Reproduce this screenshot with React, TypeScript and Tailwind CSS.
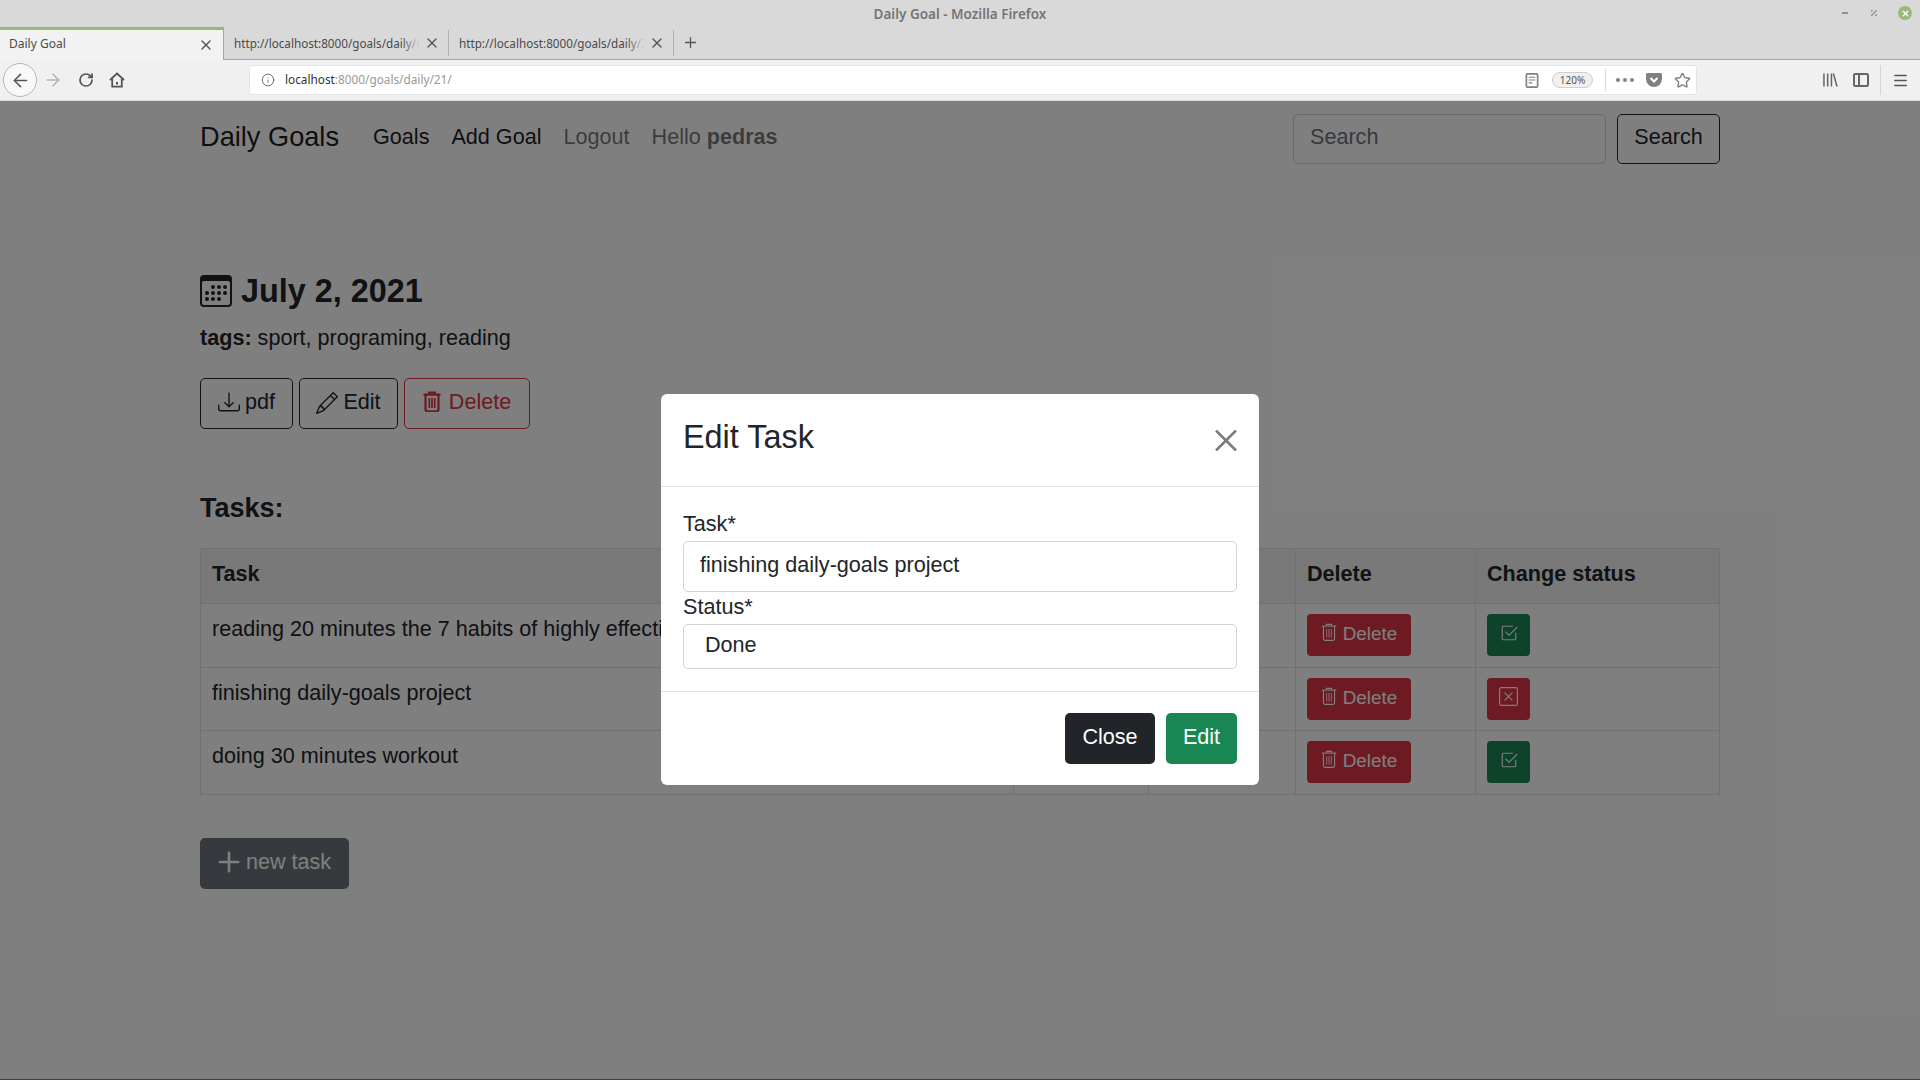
import {
  BsCalendar3,
  BsCheck2Square,
  BsDownload,
  BsPencil,
  BsPlus,
  BsXSquare,
} from 'react-icons/bs';
import { ArrowLeft, ArrowRight, Info, Menu, Plus, RotateCw, Star, X } from 'lucide-react';

const tasks = [
  { title: 'reading 20 minutes the 7 habits of highly effective people', status: 'Done', done: true },
  { title: 'finishing daily-goals project', status: 'Done', done: false },
  { title: 'doing 30 minutes workout', status: 'Done', done: true },
];

function TrashIcon({ className, weight }: { className: string; weight: number }) {
  return (
    <svg viewBox="0 0 18 21" className={className} fill="none" stroke="currentColor" strokeWidth={weight}>
      <path d="M6 3V1.6h6V3" />
      <path d="M0.5 3.6h17" />
      <path d="M2.5 4v14.5c0 1 .8 1.8 1.8 1.8h9.4c1 0 1.8-.8 1.8-1.8V4" />
      <path d="M6.3 7v10M9 7v10M11.7 7v10" strokeWidth={weight * 0.75} />
    </svg>
  );
}

function Tab({ title, active }: { title: string; active?: boolean }) {
  if (active) {
    return (
      <div className="w-[224px] h-[33px] bg-[#f2f2f2] border-t border-[#a6a6a6] border-r flex flex-col">
        <div className="h-[2px] bg-[#9ab87c]" />
        <div className="flex-1 flex items-center pl-[9px] pr-[9px] justify-between">
          <span className="text-[12px] text-[#4a4a4a] -mt-[2px]">{title}</span>
          <X className="w-[16px] h-[16px] text-[#555]" strokeWidth={2} />
        </div>
      </div>
    );
  }
  return (
    <div className="w-[225px] h-[26px] mt-[3px] border-r border-[#b0b0b0] flex items-center pl-[10px] pr-[8px] justify-between">
      <div className="relative w-[186px] -mt-[2px] overflow-hidden whitespace-nowrap">
        <span className="text-[11.7px] text-[#4a4a4a]">{title}</span>
        <div className="absolute right-0 top-0 bottom-0 w-[18px] bg-linear-to-l from-[#d9d9d9] to-transparent" />
      </div>
      <X className="w-[16px] h-[16px] text-[#555]" strokeWidth={2} />
    </div>
  );
}

function BrowserChrome() {
  return (
    <div className="font-['Noto_Sans',sans-serif] shrink-0">
      {/* title bar */}
      <div className="relative h-[27px] bg-[#d9d9d9] flex items-center justify-center">
        <span className="text-[13.5px] font-semibold text-[#757575] mt-[2px]">Daily Goal - Mozilla Firefox</span>
        <div className="absolute right-[8px] top-[6px] flex items-center">
          <div className="w-[6px] h-[2px] bg-[#909090] mr-[23px]" />
          <svg viewBox="0 0 6 6" className="w-[6px] h-[6px] mr-[21px]">
            <path d="M0 2.5L2.5 0H0zM6 3.5L3.5 6H6zM1 6L6 1V0H5L0 5v1z" fill="#969696" />
          </svg>
          <div className="w-[14px] h-[14px] rounded-full bg-[#9ab87c] flex items-center justify-center">
            <X className="w-[9px] h-[9px] text-white" strokeWidth={3.5} />
          </div>
        </div>
      </div>
      {/* tabs */}
      <div className="h-[33px] bg-[#d9d9d9] border-b border-[#a6a6a6] flex items-start">
        <Tab title="Daily Goal" active />
        <Tab title="http://localhost:8000/goals/daily/create" />
        <Tab title="http://localhost:8000/goals/daily/21/edit" />
        <Plus className="w-[17px] h-[17px] text-[#555] ml-[8px] mt-[7px]" strokeWidth={1.8} />
      </div>
      {/* nav bar */}
      <div className="h-[41px] bg-[#f0f0f0] border-b border-[#dcdcdc] flex items-center pl-[3px]">
        <div className="w-[34px] h-[34px] rounded-full border border-[#b5b5b5] bg-[#f8f8f8] flex items-center justify-center">
          <ArrowLeft className="w-[21px] h-[21px] text-[#555]" strokeWidth={1.7} />
        </div>
        <ArrowRight className="w-[20px] h-[20px] text-[#b3b3b3] ml-[6px]" strokeWidth={1.7} />
        <RotateCw className="w-[16px] h-[16px] text-[#555] ml-[15px]" strokeWidth={2.6} />
        <svg viewBox="0 0 16 16" className="w-[16px] h-[16px] ml-[15px]" fill="none" stroke="#555" strokeWidth="1.8">
          <path d="M1 8l7-6.5L15 8" />
          <path d="M3.2 7v7.6h9.6V7" />
          <rect x="7" y="10" width="2" height="2.5" fill="#555" stroke="none" />
        </svg>
        <div className="ml-[124px] w-[1448px] h-[30px] bg-white rounded-[3px] border border-[#e4e4e4] flex items-center pl-[11px] pr-[5px]">
          <Info className="w-[14px] h-[14px] text-[#666]" strokeWidth={1.6} />
          <span className="ml-[10px] text-[11.8px] text-[#333]">
            localhost<span className="text-[#999]">:8000/goals/daily/21/</span>
          </span>
          <div className="flex-1" />
          <svg viewBox="0 0 14 16" className="w-[14px] h-[15px]" fill="none" stroke="#808080" strokeWidth="1.8">
            <rect x="1" y="1" width="12" height="14" rx="1" />
            <path d="M3.5 4.5h7M3.5 7.5h7M3.5 10.5h4" strokeWidth="1.2" />
          </svg>
          <div className="ml-[13px] w-[41px] h-[16px] rounded-full border border-[#cfcfcf] bg-[#f0f0f0] flex items-center justify-center text-[10px] text-[#555]">
            120%
          </div>
          <div className="ml-[12px] w-px h-[22px] bg-[#d5d5d5]" />
          <div className="ml-[10px] flex gap-[3px]">
            <div className="w-[4px] h-[4px] rounded-full bg-[#808080]" />
            <div className="w-[4px] h-[4px] rounded-full bg-[#808080]" />
            <div className="w-[4px] h-[4px] rounded-full bg-[#808080]" />
          </div>
          <svg viewBox="0 0 16 14" className="w-[16px] h-[14px] ml-[12px]">
            <path d="M1.5 0h13A1.5 1.5 0 0 1 16 1.5V6a8 8 0 0 1-16 0V1.5A1.5 1.5 0 0 1 1.5 0z" fill="#808080" />
            <path d="M4.5 5L8 8.5 11.5 5" stroke="#fff" strokeWidth="2" fill="none" />
          </svg>
          <Star className="w-[17px] h-[17px] text-[#808080] ml-[12px]" strokeWidth={2} />
        </div>
        <div className="flex-1 flex items-center justify-end pr-[11px]">
          <svg viewBox="0 0 16 14" className="w-[15px] h-[14px] mr-[15px]">
            <path d="M1 0v14M5 0v14M9 0v14M11 0l4 14" stroke="#666" strokeWidth="1.6" fill="none" />
          </svg>
          <div className="w-[16px] h-[14px] rounded-[2px] border-2 border-[#666] mr-[11px] flex">
            <div className="w-[5px] border-r-2 border-[#666]" />
          </div>
          <div className="w-px h-[30px] bg-[#d5d5d5] mr-[11px]" />
          <Menu className="w-[17px] h-[17px] text-[#555]" strokeWidth={2.2} />
        </div>
      </div>
    </div>
  );
}

function TaskRow({ title, status, done }: { title: string; status: string; done: boolean }) {
  return (
    <tr className="h-[63.5px] border-t border-[#dee2e6]">
      <td className="px-[11px] pt-[9px] align-top whitespace-nowrap overflow-hidden">{title}</td>
      <td className="border-l border-[#dee2e6] px-[11px] pt-[9px] align-top">{status}</td>
      <td className="border-l border-[#dee2e6] px-[11px] pt-[10px] align-top" />
      <td className="border-l border-[#dee2e6] px-[11px] pt-[10px] align-top">
        <button className="w-[104px] h-[42px] bg-[#dc3545] rounded-[4px] text-white text-[18.9px] flex items-center justify-center gap-[6px] pb-[1px]">
          <TrashIcon className="w-[16px] h-[18px] -mt-[5px]" weight={1.3} />
          Delete
        </button>
      </td>
      <td className="border-l border-[#dee2e6] px-[11px] pt-[10px] align-top">
        {done ? (
          <button className="w-[43px] h-[42px] bg-[#198754] rounded-[4px] text-white flex items-center justify-center">
            <BsCheck2Square className="w-[18px] h-[18px] -mt-[4px]" />
          </button>
        ) : (
          <button className="w-[43px] h-[42px] bg-[#dc3545] rounded-[4px] text-white flex items-center justify-center">
            <BsXSquare className="w-[19px] h-[19px] -mt-[4px]" />
          </button>
        )}
      </td>
    </tr>
  );
}

function EditModal() {
  return (
    <div className="absolute inset-0 bg-black/50 flex justify-center pt-[293px]">
      <div className="w-[598px] h-[391px] bg-white rounded-[6px] flex flex-col">
        <div className="h-[93px] border-b border-[#dee2e6] flex items-start justify-between pl-[22px] pr-[22px] pt-[24px]">
          <h5 className="text-[32.4px] leading-[1.2] text-[#212529]">Edit Task</h5>
          <svg viewBox="0 0 22 21" className="w-[22px] h-[21px] mt-[12px]" fill="none" stroke="#7c7c7c" strokeWidth="2.6">
            <path d="M1 0.5l20 20M21 0.5l-20 20" />
          </svg>
        </div>
        <div className="h-[205px] border-b border-[#dee2e6] px-[22px] pt-[21px] leading-[32px] text-[#212529]">
          <label className="block h-[33px]">Task*</label>
          <div className="h-[51px] border border-[#ced4da] rounded-[5px] pl-[16px] pt-[7px]">finishing daily-goals project</div>
          <label className="block h-[32px] -mt-[1px] mb-[1px]">Status*</label>
          <div className="h-[45px] border border-[#ced4da] rounded-[5px] pl-[21px] pt-[4px]">Done</div>
        </div>
        <div className="flex-1 flex justify-end gap-[11px] pt-[21px] pr-[22px]">
          <button className="w-[90px] h-[51px] bg-[#212529] rounded-[5px] text-white pb-[2px]">Close</button>
          <button className="w-[71px] h-[51px] bg-[#198754] rounded-[5px] text-white pb-[2px]">Edit</button>
        </div>
      </div>
    </div>
  );
}

export default function App() {
  return (
    <div className="w-[1920px] h-[1080px] overflow-hidden flex flex-col bg-white">
      <BrowserChrome />
      <div className="relative flex-1 border-b border-[#404040] font-['Liberation_Sans',Arial,sans-serif] text-[21.6px] text-[#212529]">
        <div className="w-[1520px] ml-[200px]">
          {/* navbar */}
          <div className="flex items-start pt-[13px]">
            <a className="text-[27.2px] leading-[40px] text-black/90 mt-[3px]">Daily Goals</a>
            <nav className="flex gap-[22px] ml-[34px] mt-[7px] leading-[32px]">
              <a className="text-black/90">Goals</a>
              <a className="text-black/90">Add Goal</a>
              <a className="text-black/55">Logout</a>
              <span className="text-black/55">
                Hello <b>pedras</b>
              </span>
            </nav>
            <div className="flex-1" />
            <div className="w-[313px] h-[50px] border border-[#ced4da] rounded-[5px] pl-[16px] pt-[6px] text-[#6c757d]">Search</div>
            <button className="ml-[11px] w-[103px] h-[50px] border border-[#212529] rounded-[5px] pb-[3px]">Search</button>
          </div>

          {/* goal header */}
          <div className="flex items-center mt-[108px]">
            <BsCalendar3 className="w-[32px] h-[32px] text-[#212529]" />
            <h4 className="ml-[9px] text-[32.4px] font-bold leading-[38px]">July 2, 2021</h4>
          </div>
          <p className="mt-[12px] leading-[32px]">
            <b>tags:</b> sport, programing, reading
          </p>
          <div className="flex gap-[6px] mt-[24px]">
            <button className="w-[93px] h-[51px] border border-[#212529] rounded-[5px] flex items-center justify-center gap-[5px] pb-[2px]">
              <BsDownload className="w-[22px] h-[22px] -mt-[1px]" />
              pdf
            </button>
            <button className="w-[99px] h-[51px] border border-[#212529] rounded-[5px] flex items-center justify-center gap-[5px] pb-[2px]">
              <BsPencil className="w-[22px] h-[22px]" />
              Edit
            </button>
            <button className="w-[126px] h-[51px] border border-[#dc3545] text-[#dc3545] rounded-[5px] flex items-center justify-center gap-[8px] pb-[2px]">
              <TrashIcon className="w-[18px] h-[21px] -mt-[2px]" weight={2.2} />
              Delete
            </button>
          </div>

          <h5 className="text-[27px] font-bold leading-[32px] mt-[63px]">Tasks:</h5>

          {/* tasks */}
          <table className="w-[1520px] table-fixed border border-[#dee2e6] mt-[24px] border-collapse">
            <thead>
              <tr className="h-[55px] bg-black/5 font-bold text-left">
                <th className="w-[813px] px-[11px] pb-[4px]">Task</th>
                <th className="w-[135px] px-[11px] pb-[4px] border-l border-[#dee2e6]">Status</th>
                <th className="w-[147px] px-[11px] pb-[4px] border-l border-[#dee2e6]">Edit</th>
                <th className="w-[180px] px-[11px] pb-[4px] border-l border-[#dee2e6]">Delete</th>
                <th className="px-[11px] pb-[4px] border-l border-[#dee2e6]">Change status</th>
              </tr>
            </thead>
            <tbody>
              {tasks.map((task) => (
                <TaskRow key={task.title} {...task} />
              ))}
            </tbody>
          </table>

          <button className="mt-[43px] w-[149px] h-[51px] bg-[#6c757d] rounded-[5px] text-white flex items-center justify-center pb-[2px]">
            <BsPlus className="w-[42px] h-[42px] -ml-[10px] -mr-[4px]" />
            new task
          </button>
        </div>
        <EditModal />
      </div>
    </div>
  );
}
